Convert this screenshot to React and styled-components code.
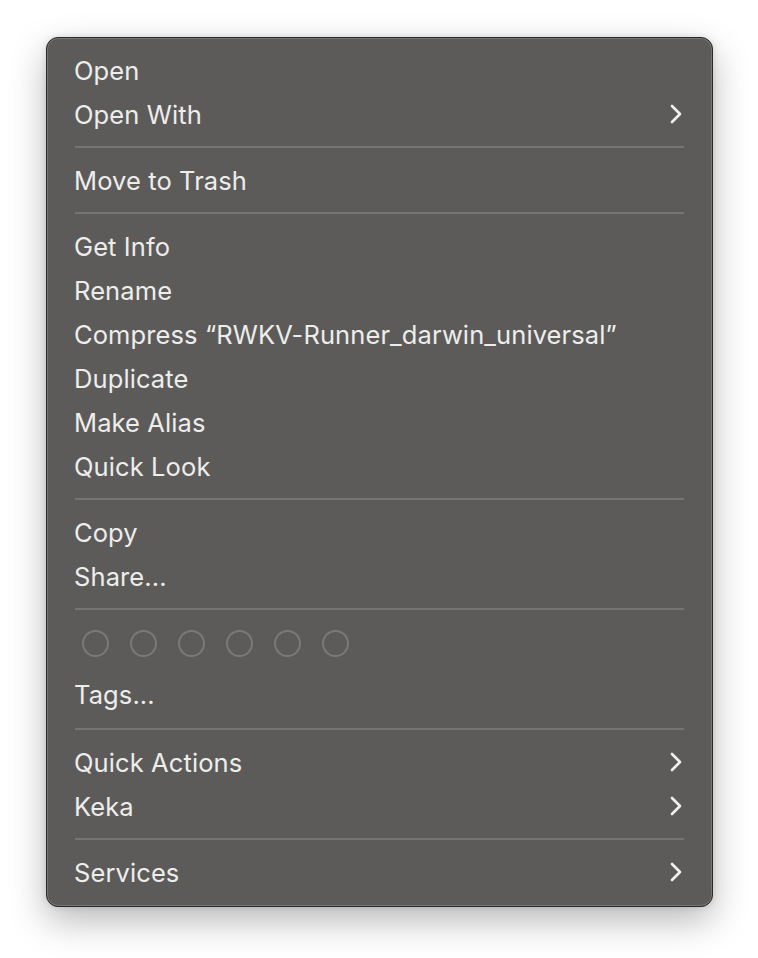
import styled, { createGlobalStyle } from "styled-components";

const GlobalStyle = createGlobalStyle`
  html, body {
    margin: 0;
    padding: 0;
    background: #ffffff;
  }
  body {
    width: 758px;
    height: 958px;
    overflow: hidden;
    font-family: Inter, "Liberation Sans", sans-serif;
  }
`;

const Stage = styled.div`
  padding: 37px 45px 0 46px;
`;

const Menu = styled.div`
  width: 667px;
  box-sizing: border-box;
  background: #5c5b59;
  border-radius: 12px;
  border: 1px solid #2b2a29;
  box-shadow:
    inset 0 0 0 1px #777674,
    0 14px 36px rgba(0, 0, 0, 0.28),
    0 0 6px rgba(0, 0, 0, 0.12);
  padding: 10px 28px 12px 27px;
  display: flex;
  flex-direction: column;
`;

const Group = styled.div`
  padding-bottom: ${(p) => (p.$extra ? "2px" : "0")};
`;

const Item = styled.div`
  height: 44px;
  display: flex;
  align-items: center;
  justify-content: space-between;
  color: #ededec;
  font-size: 25.5px;
  letter-spacing: 0.1px;
  white-space: nowrap;
`;

const Separator = styled.div`
  height: 22px;
  display: flex;
  align-items: center;
  padding-left: 1px;

  &::after {
    content: "";
    flex: 1;
    height: 2px;
    background: #767573;
  }
`;

const TagRow = styled.div`
  height: 52px;
  display: flex;
  align-items: flex-start;
  gap: 21px;
  padding: 10px 0 0 8px;
  box-sizing: border-box;
`;

const TagDot = styled.span`
  width: 27px;
  height: 27px;
  box-sizing: border-box;
  border-radius: 50%;
  border: 2px solid #7b7a77;
`;

function Chevron() {
  return (
    <svg width="14" height="20" viewBox="0 0 14 20" style={{ marginRight: 1 }}>
      <path
        d="M3 2 L11 10 L3 18"
        fill="none"
        stroke="#f0f0ef"
        strokeWidth="2.6"
        strokeLinecap="round"
        strokeLinejoin="round"
      />
    </svg>
  );
}

const groups = [
  [{ label: "Open" }, { label: "Open With", sub: true }],
  [{ label: "Move to Trash" }],
  [
    { label: "Get Info" },
    { label: "Rename" },
    { label: "Compress \u201CRWKV-Runner_darwin_universal\u201D" },
    { label: "Duplicate" },
    { label: "Make Alias" },
    { label: "Quick Look" },
  ],
  [{ label: "Copy" }, { label: "Share..." }],
  "tags",
  [
    { label: "Quick Actions", sub: true },
    { label: "Keka", sub: true },
  ],
  [{ label: "Services", sub: true }],
];

export default function App() {
  return (
    <>
      <GlobalStyle />
      <Stage>
        <Menu>
          {groups.map((group, gi) => (
            <Group key={gi} $extra={group === "tags"}>
              {gi > 0 && <Separator />}
              {group === "tags" ? (
                <>
                  <TagRow>
                    {[0, 1, 2, 3, 4, 5].map((i) => (
                      <TagDot key={i} />
                    ))}
                  </TagRow>
                  <Item>Tags...</Item>
                </>
              ) : (
                group.map((item) => (
                  <Item key={item.label}>
                    <span>{item.label}</span>
                    {item.sub && <Chevron />}
                  </Item>
                ))
              )}
            </Group>
          ))}
        </Menu>
      </Stage>
    </>
  );
}
